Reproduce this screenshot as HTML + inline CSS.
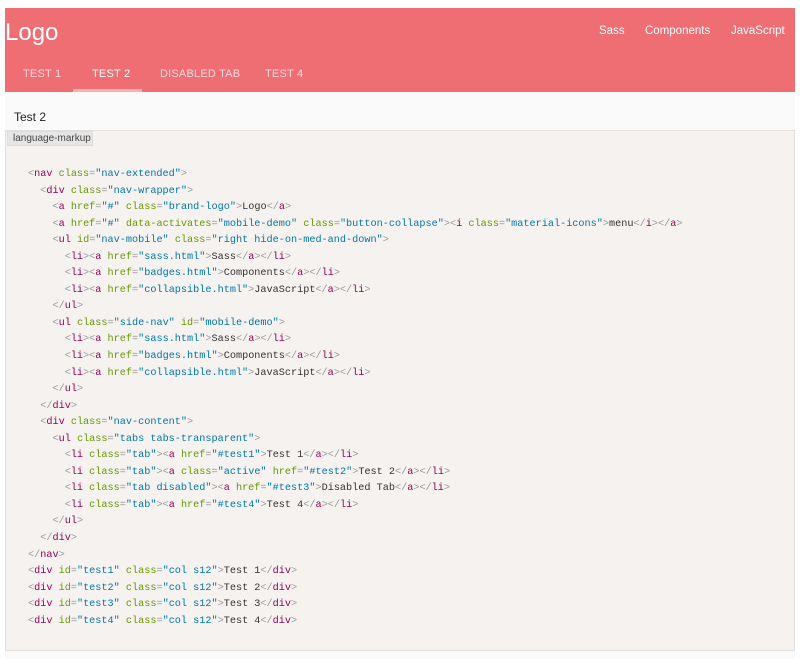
<!DOCTYPE html>
<html><head><meta charset="utf-8"><style>
*{margin:0;padding:0;box-sizing:border-box}
body{width:800px;height:659px;background:#fff;font-family:"Liberation Sans",sans-serif;overflow:hidden;position:relative}
.hdr{position:absolute;left:5px;top:8px;width:790px;height:84px;background:#ee6e73}
.logo{position:absolute;left:0;top:11px;color:#fff;font-size:24px}
.links{position:absolute;top:17px;color:#fff;font-size:11.5px}
.tab{position:absolute;top:60px;font-size:11px;color:rgba(255,255,255,.75);letter-spacing:.2px}
.ul{position:absolute;left:68px;top:81px;width:69px;height:3px;background:#f6b2b5}
.main{position:absolute;left:5px;top:92px;width:790px;height:567px;background:#fafafa}
.t2{position:absolute;left:14px;top:110px;font-size:12px;color:#222}
.code{position:absolute;left:5px;top:130px;width:790px;height:521px;background:#f5f2f0;border:1px solid #e2dfdc}
.lbl{position:absolute;left:7px;top:131px;width:86px;height:15px;background:#e6e6e6;font-size:10px;color:#444;padding:1px 0 0 5px;border:1px solid #ddd}
pre{position:absolute;left:28px;top:167px;font-family:"Liberation Mono",monospace;font-size:10.2px;line-height:16.55px;color:#333}
.t{color:#905}.a{color:#690}.v{color:#07a}.p{color:#999}
</style></head><body>
<div class="hdr">
<div class="logo">Logo</div>
<div class="links" style="left:594px">Sass</div>
<div class="links" style="left:640px">Components</div>
<div class="links" style="left:726px">JavaScript</div>
<div class="tab" style="left:18px">TEST 1</div>
<div class="tab" style="left:87px;color:#fff">TEST 2</div>
<div class="tab" style="left:155px">DISABLED TAB</div>
<div class="tab" style="left:260px">TEST 4</div>
<div class="ul"></div>
</div>
<div class="main"></div>
<div class="t2">Test 2</div>
<div class="code"></div>
<div class="lbl">language-markup</div>
<pre><span class="p">&lt;</span><span class="t">nav</span> <span class="a">class</span><span class="p">=</span><span class="v">"nav-extended"</span><span class="p">&gt;</span>
  <span class="p">&lt;</span><span class="t">div</span> <span class="a">class</span><span class="p">=</span><span class="v">"nav-wrapper"</span><span class="p">&gt;</span>
    <span class="p">&lt;</span><span class="t">a</span> <span class="a">href</span><span class="p">=</span><span class="v">"#"</span> <span class="a">class</span><span class="p">=</span><span class="v">"brand-logo"</span><span class="p">&gt;</span>Logo<span class="p">&lt;/</span><span class="t">a</span><span class="p">&gt;</span>
    <span class="p">&lt;</span><span class="t">a</span> <span class="a">href</span><span class="p">=</span><span class="v">"#"</span> <span class="a">data-activates</span><span class="p">=</span><span class="v">"mobile-demo"</span> <span class="a">class</span><span class="p">=</span><span class="v">"button-collapse"</span><span class="p">&gt;&lt;</span><span class="t">i</span> <span class="a">class</span><span class="p">=</span><span class="v">"material-icons"</span><span class="p">&gt;</span>menu<span class="p">&lt;/</span><span class="t">i</span><span class="p">&gt;&lt;/</span><span class="t">a</span><span class="p">&gt;</span>
    <span class="p">&lt;</span><span class="t">ul</span> <span class="a">id</span><span class="p">=</span><span class="v">"nav-mobile"</span> <span class="a">class</span><span class="p">=</span><span class="v">"right hide-on-med-and-down"</span><span class="p">&gt;</span>
      <span class="p">&lt;</span><span class="t">li</span><span class="p">&gt;&lt;</span><span class="t">a</span> <span class="a">href</span><span class="p">=</span><span class="v">"sass.html"</span><span class="p">&gt;</span>Sass<span class="p">&lt;/</span><span class="t">a</span><span class="p">&gt;&lt;/</span><span class="t">li</span><span class="p">&gt;</span>
      <span class="p">&lt;</span><span class="t">li</span><span class="p">&gt;&lt;</span><span class="t">a</span> <span class="a">href</span><span class="p">=</span><span class="v">"badges.html"</span><span class="p">&gt;</span>Components<span class="p">&lt;/</span><span class="t">a</span><span class="p">&gt;&lt;/</span><span class="t">li</span><span class="p">&gt;</span>
      <span class="p">&lt;</span><span class="t">li</span><span class="p">&gt;&lt;</span><span class="t">a</span> <span class="a">href</span><span class="p">=</span><span class="v">"collapsible.html"</span><span class="p">&gt;</span>JavaScript<span class="p">&lt;/</span><span class="t">a</span><span class="p">&gt;&lt;/</span><span class="t">li</span><span class="p">&gt;</span>
    <span class="p">&lt;/</span><span class="t">ul</span><span class="p">&gt;</span>
    <span class="p">&lt;</span><span class="t">ul</span> <span class="a">class</span><span class="p">=</span><span class="v">"side-nav"</span> <span class="a">id</span><span class="p">=</span><span class="v">"mobile-demo"</span><span class="p">&gt;</span>
      <span class="p">&lt;</span><span class="t">li</span><span class="p">&gt;&lt;</span><span class="t">a</span> <span class="a">href</span><span class="p">=</span><span class="v">"sass.html"</span><span class="p">&gt;</span>Sass<span class="p">&lt;/</span><span class="t">a</span><span class="p">&gt;&lt;/</span><span class="t">li</span><span class="p">&gt;</span>
      <span class="p">&lt;</span><span class="t">li</span><span class="p">&gt;&lt;</span><span class="t">a</span> <span class="a">href</span><span class="p">=</span><span class="v">"badges.html"</span><span class="p">&gt;</span>Components<span class="p">&lt;/</span><span class="t">a</span><span class="p">&gt;&lt;/</span><span class="t">li</span><span class="p">&gt;</span>
      <span class="p">&lt;</span><span class="t">li</span><span class="p">&gt;&lt;</span><span class="t">a</span> <span class="a">href</span><span class="p">=</span><span class="v">"collapsible.html"</span><span class="p">&gt;</span>JavaScript<span class="p">&lt;/</span><span class="t">a</span><span class="p">&gt;&lt;/</span><span class="t">li</span><span class="p">&gt;</span>
    <span class="p">&lt;/</span><span class="t">ul</span><span class="p">&gt;</span>
  <span class="p">&lt;/</span><span class="t">div</span><span class="p">&gt;</span>
  <span class="p">&lt;</span><span class="t">div</span> <span class="a">class</span><span class="p">=</span><span class="v">"nav-content"</span><span class="p">&gt;</span>
    <span class="p">&lt;</span><span class="t">ul</span> <span class="a">class</span><span class="p">=</span><span class="v">"tabs tabs-transparent"</span><span class="p">&gt;</span>
      <span class="p">&lt;</span><span class="t">li</span> <span class="a">class</span><span class="p">=</span><span class="v">"tab"</span><span class="p">&gt;&lt;</span><span class="t">a</span> <span class="a">href</span><span class="p">=</span><span class="v">"#test1"</span><span class="p">&gt;</span>Test 1<span class="p">&lt;/</span><span class="t">a</span><span class="p">&gt;&lt;/</span><span class="t">li</span><span class="p">&gt;</span>
      <span class="p">&lt;</span><span class="t">li</span> <span class="a">class</span><span class="p">=</span><span class="v">"tab"</span><span class="p">&gt;&lt;</span><span class="t">a</span> <span class="a">class</span><span class="p">=</span><span class="v">"active"</span> <span class="a">href</span><span class="p">=</span><span class="v">"#test2"</span><span class="p">&gt;</span>Test 2<span class="p">&lt;/</span><span class="t">a</span><span class="p">&gt;&lt;/</span><span class="t">li</span><span class="p">&gt;</span>
      <span class="p">&lt;</span><span class="t">li</span> <span class="a">class</span><span class="p">=</span><span class="v">"tab disabled"</span><span class="p">&gt;&lt;</span><span class="t">a</span> <span class="a">href</span><span class="p">=</span><span class="v">"#test3"</span><span class="p">&gt;</span>Disabled Tab<span class="p">&lt;/</span><span class="t">a</span><span class="p">&gt;&lt;/</span><span class="t">li</span><span class="p">&gt;</span>
      <span class="p">&lt;</span><span class="t">li</span> <span class="a">class</span><span class="p">=</span><span class="v">"tab"</span><span class="p">&gt;&lt;</span><span class="t">a</span> <span class="a">href</span><span class="p">=</span><span class="v">"#test4"</span><span class="p">&gt;</span>Test 4<span class="p">&lt;/</span><span class="t">a</span><span class="p">&gt;&lt;/</span><span class="t">li</span><span class="p">&gt;</span>
    <span class="p">&lt;/</span><span class="t">ul</span><span class="p">&gt;</span>
  <span class="p">&lt;/</span><span class="t">div</span><span class="p">&gt;</span>
<span class="p">&lt;/</span><span class="t">nav</span><span class="p">&gt;</span>
<span class="p">&lt;</span><span class="t">div</span> <span class="a">id</span><span class="p">=</span><span class="v">"test1"</span> <span class="a">class</span><span class="p">=</span><span class="v">"col s12"</span><span class="p">&gt;</span>Test 1<span class="p">&lt;/</span><span class="t">div</span><span class="p">&gt;</span>
<span class="p">&lt;</span><span class="t">div</span> <span class="a">id</span><span class="p">=</span><span class="v">"test2"</span> <span class="a">class</span><span class="p">=</span><span class="v">"col s12"</span><span class="p">&gt;</span>Test 2<span class="p">&lt;/</span><span class="t">div</span><span class="p">&gt;</span>
<span class="p">&lt;</span><span class="t">div</span> <span class="a">id</span><span class="p">=</span><span class="v">"test3"</span> <span class="a">class</span><span class="p">=</span><span class="v">"col s12"</span><span class="p">&gt;</span>Test 3<span class="p">&lt;/</span><span class="t">div</span><span class="p">&gt;</span>
<span class="p">&lt;</span><span class="t">div</span> <span class="a">id</span><span class="p">=</span><span class="v">"test4"</span> <span class="a">class</span><span class="p">=</span><span class="v">"col s12"</span><span class="p">&gt;</span>Test 4<span class="p">&lt;/</span><span class="t">div</span><span class="p">&gt;</span></pre>
</body></html>
